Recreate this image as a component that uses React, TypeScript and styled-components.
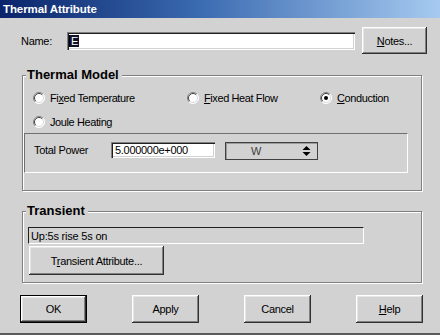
import React from "react";
import styled, { createGlobalStyle } from "styled-components";

const Global = createGlobalStyle`
  html, body { margin: 0; padding: 0; background: #d2d2d2; }
  body { font-family: "Liberation Sans", Arial, sans-serif; font-size: 11px; color: #000; }
  * { box-sizing: border-box; }
`;

const Dialog = styled.div`
  width: 440px;
  height: 335px;
  display: flex;
  flex-direction: column;
  background: #d2d2d2;
  border-bottom: 2px solid #5a5a5a;
`;

const TitleBar = styled.div`
  height: 18px;
  display: flex;
  align-items: center;
  padding-left: 3px;
  background: linear-gradient(to right, #0a246a 0%, #3a6ab0 45%, #a6caf0 100%);
  color: #fff;
  font-weight: bold;
  font-size: 11.5px;
  letter-spacing: -0.1px;
`;

const NameRow = styled.div`
  margin-top: 9px;
  height: 27px;
  display: flex;
  align-items: center;
`;

const Label = styled.span<{ $width: number; $left?: number }>`
  width: ${(p) => p.$width}px;
  margin-left: ${(p) => p.$left ?? 0}px;
  line-height: 16px;
  letter-spacing: -0.3px;
  flex: none;
`;

const Sunken = styled.div<{ $width: number; $height: number }>`
  width: ${(p) => p.$width}px;
  height: ${(p) => p.$height}px;
  background: #fff;
  flex: none;
  display: flex;
  align-items: center;
  padding-left: 3px;
  box-shadow: inset 1px 1px #808080, inset 2px 2px #202020, inset -1px -1px #fff,
    inset -2px -2px #d2d2d2;
  letter-spacing: -0.3px;
`;

const Selected = styled.span`
  background: #101028;
  color: #fff;
  line-height: 12px;
  padding: 0 1px;
  margin-left: -1px;
  border-left: 1px solid #000;
`;

const Button = styled.button<{ $width: number; $height: number; $default?: boolean }>`
  width: ${(p) => p.$width}px;
  height: ${(p) => p.$height}px;
  flex: none;
  padding: 0;
  margin: 0;
  border: ${(p) => (p.$default ? "1px solid #000" : "none")};
  background: #d2d2d2;
  font-family: "Liberation Sans", Arial, sans-serif;
  font-size: 11px;
  letter-spacing: -0.3px;
  color: #000;
  box-shadow: inset -1px -1px #303030, inset 1px 1px #fff, inset -2px -2px #808080,
    inset 2px 2px #e6e6e6;
`;

const NotesButton = styled(Button)`
  margin-left: 7px;
`;

const Key = styled.u`
  text-decoration: underline;
  text-underline-offset: 1px;
`;

const Group = styled.div<{ $top: number; $height: number }>`
  position: relative;
  margin-top: ${(p) => p.$top}px;
  margin-left: 22px;
  width: 400px;
  height: ${(p) => p.$height}px;
  border: 1px solid #808080;
  box-shadow: inset 1px 1px #fff, 1px 1px #fff;
  display: flex;
  flex-direction: column;
`;

const Legend = styled.span`
  position: absolute;
  top: -9px;
  left: 3px;
  padding: 0 3px 0 1px;
  background: #d2d2d2;
  font-weight: bold;
  font-size: 13px;
  line-height: 16px;
`;

const RadioGrid = styled.div`
  padding-top: 14px;
  padding-left: 10px;
  display: grid;
  grid-template-columns: 154px 133px auto;
  grid-auto-rows: 16px;
  row-gap: 8px;
`;

const RadioItem = styled.label`
  display: flex;
  align-items: center;
  gap: 5px;
  letter-spacing: -0.4px;
  white-space: nowrap;
`;

const Radio = ({ checked }: { checked?: boolean }) => (
  <svg width="12" height="12" viewBox="0 0 12 12" style={{ flex: "none" }}>
    <circle cx="6" cy="6" r="5.5" fill="#fff" />
    <path d="M2.1 9.9 A5.5 5.5 0 0 1 9.9 2.1" stroke="#808080" fill="none" />
    <path d="M9.9 2.1 A5.5 5.5 0 0 1 2.1 9.9" stroke="#fff" fill="none" />
    <path d="M2.8 9.2 A4.5 4.5 0 0 1 9.2 2.8" stroke="#404040" fill="none" />
    <path d="M9.2 2.8 A4.5 4.5 0 0 1 2.8 9.2" stroke="#d8d8d8" fill="none" />
    {checked && <circle cx="6" cy="6" r="2" fill="#000" />}
  </svg>
);

const InnerBox = styled.div`
  margin-top: 3px;
  margin-left: 1px;
  width: 384px;
  height: 40px;
  border-top: 1px solid #707070;
  border-left: 1px solid #707070;
  border-bottom: 1px solid #fff;
  border-right: 1px solid #fff;
  display: flex;
  align-items: flex-start;
  padding-top: 8px;
  padding-left: 9px;
`;

const PowerInput = styled(Sunken)`
  padding-left: 4px;
`;

const Select = styled.div`
  margin-left: 10px;
  width: 93px;
  height: 18px;
  flex: none;
  border: 1px solid #404040;
  box-shadow: inset 1px 1px #9a9a9a;
  display: flex;
  align-items: center;
  padding-left: 25px;
  padding-right: 6px;
  justify-content: space-between;
  color: #404040;
  font-size: 11px;
`;

const Arrows = () => (
  <svg width="9" height="12" viewBox="0 0 9 12">
    <path d="M0.5 5 L4.5 1 L8.5 5 Z" fill="#000" />
    <path d="M0.5 7 L4.5 11 L8.5 7 Z" fill="#000" />
  </svg>
);

const Status = styled.div`
  margin-top: 15px;
  margin-left: 5px;
  width: 336px;
  height: 17px;
  border-top: 1px solid #202020;
  border-left: 1px solid #202020;
  border-bottom: 1px solid #fff;
  border-right: 1px solid #fff;
  display: flex;
  align-items: center;
  padding-left: 2px;
  letter-spacing: -0.2px;
`;

const TransientButton = styled(Button)`
  margin-top: 2px;
  margin-left: 6px;
`;

const ButtonRow = styled.div`
  margin-top: 12px;
  padding: 0 17px 0 20px;
  display: flex;
  justify-content: space-between;
`;

export default function App() {
  return (
    <>
      <Global />
      <Dialog>
        <TitleBar>Thermal Attribute</TitleBar>
        <NameRow>
          <Label $width={46} $left={21}>
            Name:
          </Label>
          <Sunken $width={288} $height={18}>
            <Selected>E</Selected>
          </Sunken>
          <NotesButton $width={65} $height={27}>
            <Key>N</Key>otes...
          </NotesButton>
        </NameRow>

        <Group $top={21} $height={116}>
          <Legend>Thermal Model</Legend>
          <RadioGrid>
            <RadioItem>
              <Radio />
              <span>
                Fi<Key>x</Key>ed Temperature
              </span>
            </RadioItem>
            <RadioItem>
              <Radio />
              <span>
                <Key>F</Key>ixed Heat Flow
              </span>
            </RadioItem>
            <RadioItem>
              <Radio checked />
              <span>
                <Key>C</Key>onduction
              </span>
            </RadioItem>
            <RadioItem>
              <Radio />
              <span>Joule Heating</span>
            </RadioItem>
          </RadioGrid>
          <InnerBox>
            <Label $width={77}>Total Power</Label>
            <PowerInput $width={104} $height={16}>
              5.000000e+000
            </PowerInput>
            <Select>
              <span>W</span>
              <Arrows />
            </Select>
          </InnerBox>
        </Group>

        <Group $top={20} $height={72}>
          <Legend>Transient</Legend>
          <Status>Up:5s rise 5s on</Status>
          <TransientButton $width={135} $height={29}>
            T<Key>r</Key>ansient Attribute...
          </TransientButton>
        </Group>

        <ButtonRow>
          <Button $width={67} $height={28} $default>
            OK
          </Button>
          <Button $width={67} $height={28}>
            Apply
          </Button>
          <Button $width={67} $height={28}>
            Cancel
          </Button>
          <Button $width={67} $height={28}>
            <Key>H</Key>elp
          </Button>
        </ButtonRow>
      </Dialog>
    </>
  );
}
